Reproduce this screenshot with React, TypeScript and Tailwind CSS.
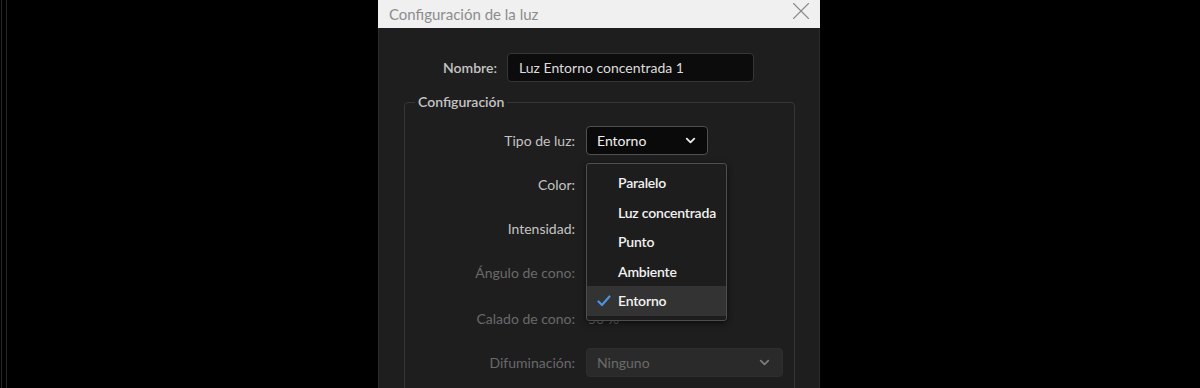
import { ChevronDown, X } from "lucide-react";

const menuItems = ["Paralelo", "Luz concentrada", "Punto", "Ambiente", "Entorno"];

function Row({
  label,
  dim,
  children,
  className = "",
}: {
  label: string;
  dim?: boolean;
  children?: React.ReactNode;
  className?: string;
}) {
  return (
    <div className={`flex h-[29px] items-center gap-[11px] ${className}`}>
      <span
        className={`w-[170px] text-right text-[14px] ${dim ? "text-[#6a6a6a]" : "text-[#c4c4c4]"}`}
      >
        {label}
      </span>
      {children}
    </div>
  );
}

function TypeMenu() {
  return (
    <div className="absolute left-0 top-[37px] z-10 w-[141px] rounded-[3px] border border-[#4e4e4e] bg-[#1d1d1d] pb-[4px] pt-[4px] shadow-[0_2px_6px_rgba(0,0,0,0.6)]">
      {menuItems.map((item) => {
        const active = item === "Entorno";
        return (
          <div
            key={item}
            className={`flex h-[29.5px] items-center text-[14px] font-semibold tracking-[-0.2px] text-[#f2f2f2] ${active ? "bg-[#333333]" : ""}`}
          >
            <span className="flex w-[31px] justify-center pl-[2px]">
              {active && (
                <svg width="14" height="12" viewBox="0 0 14 12">
                  <polyline
                    points="1.5,6.5 5,10 12.5,1.5"
                    fill="none"
                    stroke="#4b93e0"
                    strokeWidth="2.2"
                    strokeLinecap="round"
                    strokeLinejoin="round"
                  />
                </svg>
              )}
            </span>
            {item}
          </div>
        );
      })}
    </div>
  );
}

export default function App() {
  return (
    <div
      className="flex h-[388px] w-[1200px] overflow-hidden bg-black"
      style={{ fontFamily: "Lato, 'Open Sans', sans-serif" }}
    >
      <div className="ml-[1px] w-[1px] bg-[#262626]"></div>
      <div className="ml-[4px] w-[1px] bg-[#262626]"></div>

      <div className="ml-[371px] flex w-[442px] flex-col">
        <div className="flex h-[28px] shrink-0 items-center justify-between bg-[#f0f0f0] pl-[11px] pr-[4px]">
          <span className="text-[15px] text-[#8c8c8c]">Configuración de la luz</span>
          <X size={30} strokeWidth={0.9} className="-mt-[7px] text-[#8a8a8a]" />
        </div>

        <div className="flex flex-1 flex-col overflow-hidden border-x border-[#2c2c2c] bg-[#1e1e1e] pl-[25px] pr-[24px] pt-[25px]">
          <div className="flex h-[29px] shrink-0 items-center gap-[10px]">
            <span className="w-[93px] text-right text-[14px] font-semibold text-[#c4c4c4]">
              Nombre:
            </span>
            <div className="flex h-[29px] w-[247px] items-center rounded-[4px] border border-[#363636] bg-[#0c0c0c] pl-[11px] text-[14px] text-[#dcdcdc]">
              Luz Entorno concentrada 1
            </div>
          </div>

          <fieldset className="mt-[10px] min-h-[330px] shrink-0 rounded-[4px] border border-[#363636] pt-[14px]">
            <legend className="ml-[10px] px-[3px] text-[14px] font-semibold leading-[20px] text-[#c4c4c4]">
              Configuración
            </legend>

            <div className="flex flex-col">
              <Row label="Tipo de luz:">
                <div className="relative">
                  <div className="flex h-[29px] w-[122px] items-center justify-between rounded-[4px] border border-[#505050] bg-[#0a0a0a] pl-[10px] pr-[9px] text-[14px] text-[#f0f0f0]">
                    Entorno
                    <ChevronDown size={15} strokeWidth={3} className="text-[#e8e8e8]" />
                  </div>
                  <TypeMenu />
                </div>
              </Row>
              <Row label="Color:" className="mt-[15px]" />
              <Row label="Intensidad:" className="mt-[15px]" />
              <Row label="Ángulo de cono:" dim className="mt-[15px]" />
              <Row label="Calado de cono:" dim className="mt-[17px]">
                <span className="pl-[2px] text-[14px] text-[#6a6a6a]">50 %</span>
              </Row>
              <Row label="Difuminación:" dim className="mt-[15px]">
                <div className="flex h-[29px] w-[197px] items-center justify-between rounded-[4px] border border-[#2e2e2e] bg-[#2a2a2a] pl-[10px] pr-[10px] text-[14px] text-[#6a6a6a]">
                  Ninguno
                  <ChevronDown size={15} strokeWidth={3} className="text-[#7a7a7a]" />
                </div>
              </Row>
            </div>
          </fieldset>
        </div>
      </div>
    </div>
  );
}
